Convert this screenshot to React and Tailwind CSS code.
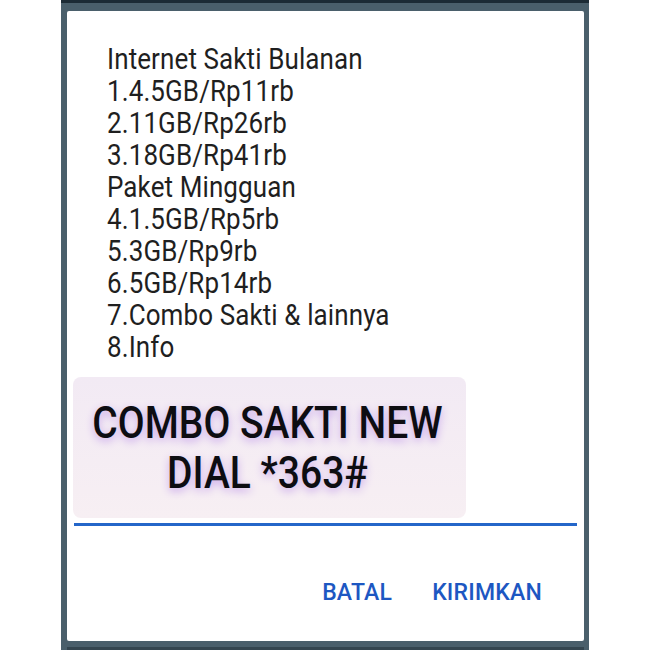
import React from 'react';

const menu = [
  'Internet Sakti Bulanan',
  '1.4.5GB/Rp11rb',
  '2.11GB/Rp26rb',
  '3.18GB/Rp41rb',
  'Paket Mingguan',
  '4.1.5GB/Rp5rb',
  '5.3GB/Rp9rb',
  '6.5GB/Rp14rb',
  '7.Combo Sakti & lainnya',
  '8.Info',
];

export default function App() {
  return (
    <div className="w-[650px] h-[650px] bg-white overflow-hidden font-['Roboto',sans-serif]">
      {/* dark phone frame around the USSD dialog */}
      <div className="ml-[61px] w-[528px] h-[650px] bg-[#4a5f6b] border-t-[3px] border-[#1c2b35] pt-[8px] pl-[6px] pr-[5px] flex flex-col">
        <div className="bg-white h-[630px] rounded-[2px] flex flex-col">
          <div className="pl-[40px] pt-[32px] text-[#1f1f1f] text-[26px] leading-[32px] tracking-[0.1px]">
            {menu.map((line) => (
              <div key={line} className="scale-y-[1.12] origin-center">{line}</div>
            ))}
          </div>

          {/* promo banner */}
          <div className="ml-[6px] mt-[14px] w-[393px] h-[141px] rounded-[8px] bg-gradient-to-b from-[#f2eaf4] to-[#f7eff3] flex flex-col items-center justify-center pr-[4px]">
            <div className="text-[39px] leading-[50px] font-medium text-[#0d0d12] scale-y-[1.15] [text-shadow:0_3px_8px_#c7a4ea]">
              COMBO SAKTI NEW
            </div>
            <div className="text-[39px] leading-[50px] font-medium text-[#0d0d12] scale-y-[1.15] [text-shadow:0_3px_8px_#c7a4ea]">
              DIAL *363#
            </div>
          </div>

          <div className="ml-[7px] mt-[5px] w-[503px] h-[3px] bg-[#2466c9]" />

          <div className="flex justify-end gap-[40px] pr-[42px] mt-[50px] text-[23px] font-medium text-[#1d57c2] tracking-[0.2px]">
            <span>BATAL</span>
            <span>KIRIMKAN</span>
          </div>
        </div>
        <div className="flex-1 bg-[#34454f] mt-[6px]" />
      </div>
    </div>
  );
}
